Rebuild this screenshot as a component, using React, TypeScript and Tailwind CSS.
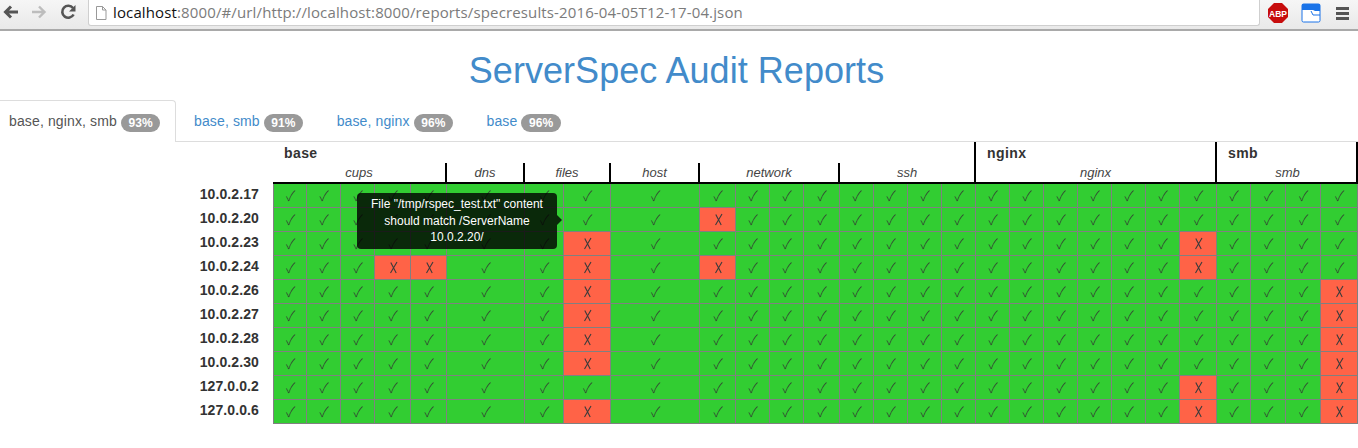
import React from 'react';

const gridCols = 'grid grid-cols-[33px_34px_34px_36px_36px_78px_39px_47px_89px_36px_34px_34px_36px_34px_34px_34px_34px_34px_34px_34px_34px_34px_34px_37px_34px_35px_35px_37px]';

const hosts = ['10.0.2.17', '10.0.2.20', '10.0.2.23', '10.0.2.24', '10.0.2.26', '10.0.2.27', '10.0.2.28', '10.0.2.30', '127.0.0.2', '127.0.0.6'];

// failed column indexes per host
const failures: Record<string, number[]> = {
    '10.0.2.20': [9],
    '10.0.2.23': [7, 23],
    '10.0.2.24': [3, 4, 7, 9, 23],
    '10.0.2.26': [7, 27],
    '10.0.2.27': [7, 27],
    '10.0.2.28': [7, 27],
    '10.0.2.30': [7, 27],
    '127.0.0.2': [23, 27],
    '127.0.0.6': [7, 23, 27],
};

const columns = Array.from({ length: 28 }, (_, i) => i);

const tabs = [
    { label: 'base, smb', score: '91%' },
    { label: 'base, nginx', score: '96%' },
    { label: 'base', score: '96%' },
];

const Badge = ({ score }: { score: string }) => (
    <span className="inline-block h-[18px] rounded-[10px] bg-[#999999] px-[7.5px] align-[-1px] text-[12px] leading-[18px] font-bold tracking-[0.1px] text-white">{score}</span>
);

const Toolbar = () => (
    <div className="flex h-[31px] items-start border-b-2 border-[#a9a9a9] bg-gradient-to-b from-[#f6f6f6] to-[#e9e9e9]">
        <div className="flex w-[88px] items-center pt-[3px] pl-[2px]">
            <svg width="17" height="18" viewBox="0 0 17 18" className="text-[#555555]">
                <path d="M16 9H4M9 3.500 3.500 9 9 14.500" fill="none" stroke="currentColor" strokeWidth="3" />
            </svg>
            <svg width="17" height="18" viewBox="0 0 17 18" className="ml-[12px] text-[#bdbdbd]">
                <path d="M1 9h12M8 3.500 13.500 9 8 14.500" fill="none" stroke="currentColor" strokeWidth="2.400" />
            </svg>
            <svg width="17" height="18" viewBox="0 0 17 18" className="ml-[12px] text-[#555555]">
                <path d="M13.600 11.500A6 6 0 1 1 13 5" fill="none" stroke="currentColor" strokeWidth="2.600" />
                <path d="M15.500 2v6.500H9z" fill="currentColor" />
            </svg>
        </div>
        <div className="flex h-[26px] w-[1172px] items-center rounded-b-[3px] border-x border-b border-[#cfcfcf] bg-white pl-[5px] font-['Open_Sans',sans-serif] text-[15px] tracking-[0.13px] text-[#7b7b7b]">
            <svg width="14" height="16" viewBox="0 0 14 16" className="mr-[5px] shrink-0">
                <path d="M2.500 1.500h6l3.500 3.500v9.500h-9.500zM8.500 1.500V5H12" fill="#ffffff" stroke="#999999" />
            </svg>
            <span className="text-[#111111]">localhost</span>:8000/#/url/http://localhost:8000/reports/specresults-2016-04-05T12-17-04.json
        </div>
        <div className="flex items-center pt-[3px]">
            <svg width="20" height="20" viewBox="0 0 20 20" className="ml-[8px]">
                <polygon points="6,0 14,0 20,6 20,14 14,20 6,20 0,14 0,6" fill="#c70d0d" />
                <text x="10" y="13.500" textAnchor="middle" fontSize="8.500" fontWeight="bold" fill="#ffffff">ABP</text>
            </svg>
            <svg width="20" height="20" viewBox="0 0 20 20" className="ml-[13px]">
                <rect x="1" y="1" width="18" height="18" rx="1.500" fill="#ffffff" stroke="#1a73e8" />
                <path d="M1 1h18v7h-5l-2-1H1z" fill="#1a73e8" />
                <path d="M10 8l2 4h7" fill="none" stroke="#1a73e8" />
            </svg>
            <div className="ml-[15px] flex w-[13px] flex-col gap-[2px]">
                <div className="h-[3px] bg-[#555555]" />
                <div className="h-[3px] bg-[#555555]" />
                <div className="h-[3px] bg-[#555555]" />
            </div>
        </div>
    </div>
);

// thin narrow cross, none of the installed fonts has this glyph
const FailMark = () => (
    <svg width="9" height="13" viewBox="0 0 9 13" className="mx-auto mt-[5px]" role="img" aria-label="failed">
        <path d="M1.800 1.500 7.200 12M8 1 1.500 12" fill="none" stroke="#3c3c3c" strokeWidth="1.100" />
    </svg>
);

const App: React.FC = () => {
    return (
        <div className="h-[448px] w-[1358px] overflow-hidden bg-white font-['Liberation_Sans',Arial,sans-serif] text-[14px] text-[#333333]">
            <Toolbar />
            <h1 className="mt-[20px] h-[49px] pr-[5px] text-center text-[36px] leading-[40px] tracking-[0.05px] text-[#428bca]">ServerSpec Audit Reports</h1>

            <div className="flex h-[42px] border-b border-[#dddddd] tracking-[0.13px]">
                <div className="h-[42px] w-[176px] rounded-tr-[4px] border-t border-r border-[#dddddd] bg-white pt-[10px] pl-[9px] leading-[20px] text-[#555555]">
                    base, nginx, smb <Badge score="93%" />
                </div>
                {tabs.map(tab => (
                    <div key={tab.label} className="ml-[2px] pt-[11px] pr-[15.500px] pl-[16px] leading-[20px] text-[#428bca]">
                        {tab.label} <Badge score={tab.score} />
                    </div>
                ))}
            </div>

            <div className="flex">
                <div className="w-[273px] shrink-0 pt-[40px]">
                    {hosts.map(host => (
                        <div key={host} className="h-[24px] pr-[14px] text-right leading-[24px] font-bold tracking-[0.1px]">{host}</div>
                    ))}
                </div>
                <div className="relative">
                    <div className="flex h-[40px]">
                        <div className="w-[703px] border-r-2 border-black">
                            <div className="h-[21px] pl-[11px] leading-[23px] font-bold tracking-[0.4px]">base</div>
                            <div className="flex h-[19px] text-[13px] leading-[20px] text-[#444444] italic">
                                <div className="w-[174px] border-r-2 border-black text-center">cups</div>
                                <div className="w-[78px] border-r-2 border-black text-center">dns</div>
                                <div className="w-[86px] border-r-2 border-black text-center">files</div>
                                <div className="w-[89px] border-r-2 border-black text-center">host</div>
                                <div className="w-[140px] border-r-2 border-black text-center">network</div>
                                <div className="flex-1 text-center">ssh</div>
                            </div>
                        </div>
                        <div className="w-[241px] border-r-2 border-black">
                            <div className="h-[21px] pl-[11px] leading-[23px] font-bold tracking-[0.4px]">nginx</div>
                            <div className="h-[19px] text-center text-[13px] leading-[20px] text-[#444444] italic">nginx</div>
                        </div>
                        <div className="w-[141px] border-r-2 border-black">
                            <div className="h-[21px] pl-[11px] leading-[23px] font-bold tracking-[0.4px]">smb</div>
                            <div className="h-[19px] pl-[2px] text-center text-[13px] leading-[20px] text-[#444444] italic">smb</div>
                        </div>
                    </div>
                    <div className="h-[2px] bg-black" />
                    <div className="border-b border-l border-[#808080]">
                        {hosts.map(host => (
                            <div key={host} className={`${gridCols} h-[24px] border-b border-[#808080] last:h-[23px] last:border-b-0`}>
                                {columns.map(col => {
                                    const failed = failures[host]?.includes(col);
                                    return (
                                        <div
                                            key={col}
                                            className={`border-r border-[#808080] pl-[1px] text-center font-['Noto_Sans_CJK_JP',sans-serif] text-[14px] leading-[23px] font-light text-[#333333] ${failed ? 'bg-[#ff6347]' : 'bg-[#32cd32]'}`}
                                        >
                                            {failed ? <FailMark /> : '✓'}
                                        </div>
                                    );
                                })}
                            </div>
                        ))}
                    </div>
                    {/* tooltip sits over the grid */}
                    <div className="absolute top-[51px] left-[84px] w-[200px] rounded-[4px] bg-black/80 px-[8px] py-[3px] text-center text-[12px] leading-[16.500px] text-white">
                        File "/tmp/rspec_test.txt" content should match /ServerName 10.0.2.20/
                        <div className="absolute top-[22px] -right-[5px] h-0 w-0 border-y-[5px] border-l-[5px] border-y-transparent border-l-black/80" />
                    </div>
                </div>
            </div>
        </div>
    );
};

export default App;
